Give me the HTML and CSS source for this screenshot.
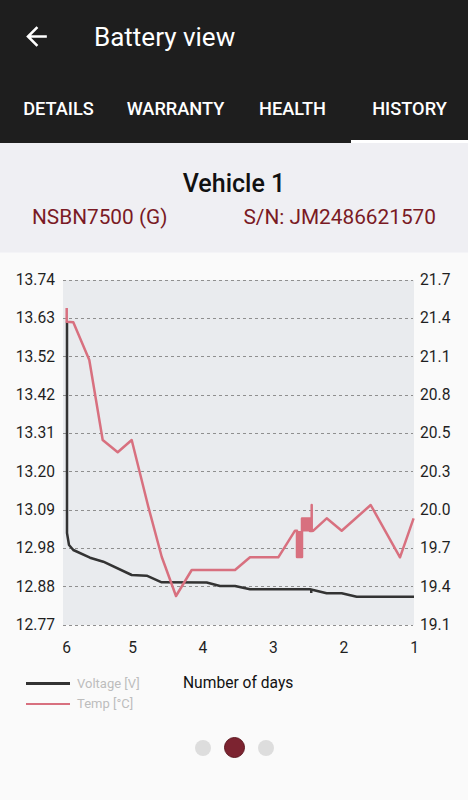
FILE: index.html
```html
<!DOCTYPE html>
<html lang="en">
<head>
<meta charset="utf-8">
<title>Battery view</title>
<link rel="stylesheet" href="styles.css">
</head>
<body>
<div class="app">
  <header class="appbar">
    <div class="toolbar">
      <svg class="back" viewBox="0 0 24 24" width="31" height="31"><path d="M20 11H7.830l5.59-5.59L12 4l-8 8 8 8 1.41-1.41L7.83 13H20v-2z" fill="#fff"/></svg>
      <h1 class="title">Battery view</h1>
    </div>
    <nav class="tabs">
      <div class="tab">DETAILS</div>
      <div class="tab">WARRANTY</div>
      <div class="tab">HEALTH</div>
      <div class="tab active">HISTORY</div>
    </nav>
  </header>

  <section class="vehicle">
    <h2 class="vehicle-name">Vehicle 1</h2>
    <div class="ids">
      <span>NSBN7500 (G)</span>
      <span>S/N: JM2486621570</span>
    </div>
  </section>

  <section class="chart">
    <svg class="plot" viewBox="0 253 468 412" width="468" height="412">
      <rect x="63" y="280" width="351" height="345" fill="#e9ebee"/>
      <g stroke="#8f8f8f" stroke-width="1" stroke-dasharray="3 3" fill="none">
        <line x1="63" y1="280.5" x2="413" y2="280.5"/>
        <line x1="63" y1="318.5" x2="413" y2="318.5"/>
        <line x1="63" y1="356.5" x2="413" y2="356.5"/>
        <line x1="63" y1="395.5" x2="413" y2="395.5"/>
        <line x1="63" y1="433.5" x2="413" y2="433.5"/>
        <line x1="63" y1="471.5" x2="413" y2="471.5"/>
        <line x1="63" y1="510.5" x2="413" y2="510.5"/>
        <line x1="63" y1="548.5" x2="413" y2="548.5"/>
        <line x1="63" y1="586.5" x2="413" y2="586.5"/>
        <line x1="63" y1="625.5" x2="413" y2="625.5"/>
      </g>
      <g class="axis" text-anchor="end">
        <text x="55" y="280">13.74</text>
        <text x="55" y="318.3">13.63</text>
        <text x="55" y="356.7">13.52</text>
        <text x="55" y="395">13.42</text>
        <text x="55" y="433.3">13.31</text>
        <text x="55" y="471.7">13.20</text>
        <text x="55" y="510">13.09</text>
        <text x="55" y="548.3">12.98</text>
        <text x="55" y="586.7">12.88</text>
        <text x="55" y="625">12.77</text>
      </g>
      <g class="axis" text-anchor="start">
        <text x="420" y="280">21.7</text>
        <text x="420" y="318.3">21.4</text>
        <text x="420" y="356.7">21.1</text>
        <text x="420" y="395">20.8</text>
        <text x="420" y="433.3">20.5</text>
        <text x="420" y="471.7">20.3</text>
        <text x="420" y="510">20.0</text>
        <text x="420" y="548.3">19.7</text>
        <text x="420" y="586.7">19.4</text>
        <text x="420" y="625">19.1</text>
      </g>
      <g class="axis" text-anchor="middle">
        <text x="66.7" y="648">6</text>
        <text x="132.7" y="648">5</text>
        <text x="203" y="648">4</text>
        <text x="273.3" y="648">3</text>
        <text x="344" y="648">2</text>
        <text x="414.7" y="648">1</text>
      </g>
      <path d="M67,321.7 L67,533 L69,545 L73.3,550 L90,557.7 L103.3,561.7 L131.7,575 L146.7,575.7 L161.7,582.3 L206.7,582.5 L220,586 L235,586 L250,589.3 L310,589.3 L326.7,593.3 L341.7,593.3 L356.7,596.7 L414,596.7" fill="none" stroke="#333333" stroke-width="2.5" stroke-linejoin="round"/>
      <rect x="310" y="589" width="2.5" height="4" fill="#333333"/>
      <path d="M66.7,308 L66.7,321.7 L73.3,322.3 L89.3,360 L102.7,440 L117.7,452.3 L131.7,440 L148.3,506.7 L161.7,556.7 L176,596 L191.7,570 L235,570 L250,557.3 L278.3,557.3 L295,530.7 L297,530.7 L297,557 L302,557 L302,531 L302,518.5 L310,518.5 L310,531 L311.7,531 L311.7,505 L311.7,531 L313.3,530.7 L326.7,518.3 L341.7,530.7 L370.7,505 L400,557.3 L413.6,518.3" fill="none" stroke="#d8707f" stroke-width="2.5" stroke-linejoin="round"/>
      <rect x="296.5" y="531" width="5.5" height="26" fill="#d8707f"/>
      <rect x="302" y="518.5" width="8" height="13" fill="#d8707f"/>
    </svg>
  </section>

  <div class="legend-row">
    <ul class="legend">
      <li class="legend-item"><span class="swatch swatch-volt"></span>Voltage [V]</li>
      <li class="legend-item"><span class="swatch swatch-temp"></span>Temp [°C]</li>
    </ul>
    <div class="x-title">Number of days</div>
  </div>

  <div class="pager">
    <span class="dot"></span>
    <span class="dot dot-active"></span>
    <span class="dot"></span>
  </div>
</div>
</body>
</html>
```

FILE: styles.css
```css
* { box-sizing: border-box; }

html, body {
  margin: 0;
  padding: 0;
  background: #fafafa;
  font-family: Roboto, "Liberation Sans", sans-serif;
}

.app {
  width: 468px;
  min-height: 800px;
  background: #fafafa;
}

.appbar {
  background: #1e1e1e;
  color: #ffffff;
}

.toolbar {
  height: 73px;
  display: flex;
  align-items: center;
  padding-left: 21px;
}

.back {
  display: block;
  flex: none;
}

.title {
  margin: 0 0 0 42px;
  font-size: 26px;
  font-weight: 400;
  line-height: 32px;
}

.tabs {
  display: grid;
  grid-template-columns: repeat(4, 1fr);
  height: 70px;
}

.tab {
  display: flex;
  align-items: center;
  justify-content: center;
  font-size: 18.2px;
  font-weight: 500;
  color: #ffffff;
  border-bottom: 3px solid transparent;
  padding-top: 3px;
}

.tab.active {
  border-bottom-color: #ffffff;
}

.vehicle {
  height: 110px;
  background: #efeff3;
  padding-top: 28px;
  display: flex;
  flex-direction: column;
  border-bottom: 1px solid #f4f4f7;
}

.vehicle-name {
  margin: 0;
  text-align: center;
  font-size: 25px;
  font-weight: 500;
  line-height: 26px;
  color: #111111;
}

.ids {
  margin-top: 7px;
  display: flex;
  justify-content: space-between;
  padding: 0 32px;
  font-size: 20.8px;
  line-height: 26px;
  color: #7a1a24;
}

.chart {
  height: 412px;
}

.plot {
  display: block;
}

.axis text {
  font-family: Roboto, "Liberation Sans", sans-serif;
  font-size: 15.6px;
  fill: #1f1f1f;
  dominant-baseline: central;
}

.legend-row {
  display: flex;
  align-items: flex-start;
  padding: 8px 0 0 26px;
}

.legend {
  list-style: none;
  margin: 0;
  padding: 0;
  width: 157px;
}

.legend-item {
  display: flex;
  align-items: center;
  height: 20.6px;
  font-size: 13px;
  color: #bdbdbd;
}

.swatch {
  display: inline-block;
  width: 44px;
  height: 2.5px;
  margin-right: 7px;
}

.swatch-volt { background: #333333; }
.swatch-temp { background: #d8707f; }

.x-title {
  height: 20.6px;
  display: flex;
  align-items: center;
  font-size: 15.6px;
  color: #111111;
}

.pager {
  margin-top: 23px;
  display: flex;
  justify-content: center;
  align-items: center;
  gap: 13px;
  height: 21px;
}

.dot {
  width: 16px;
  height: 16px;
  border-radius: 50%;
  background: #dddddd;
}

.dot-active {
  width: 21px;
  height: 21px;
  background: #7c2330;
  border: 1px solid #5e1821;
}
```
